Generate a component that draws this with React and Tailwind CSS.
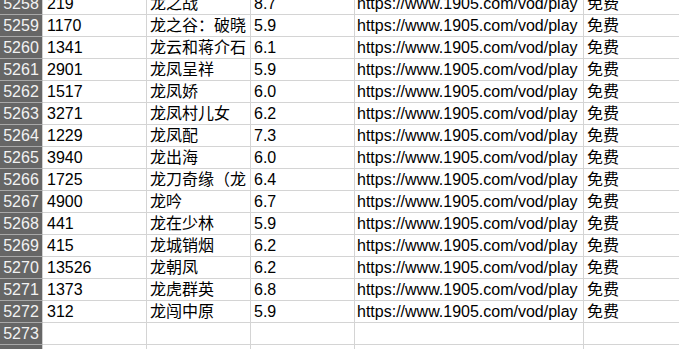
import React from "react";

const rows = [
  ["5258", "219", "龙之战", "8.7", true],
  ["5259", "1170", "龙之谷：破晓", "5.9", true],
  ["5260", "1341", "龙云和蒋介石", "6.1", true],
  ["5261", "2901", "龙凤呈祥", "5.9", true],
  ["5262", "1517", "龙凤娇", "6.0", true],
  ["5263", "3271", "龙凤村儿女", "6.2", true],
  ["5264", "1229", "龙凤配", "7.3", true],
  ["5265", "3940", "龙出海", "6.0", true],
  ["5266", "1725", "龙刀奇缘（龙", "6.4", true],
  ["5267", "4900", "龙吟", "6.7", true],
  ["5268", "441", "龙在少林", "5.9", true],
  ["5269", "415", "龙城销烟", "6.2", true],
  ["5270", "13526", "龙朝凤", "6.2", true],
  ["5271", "1373", "龙虎群英", "6.8", true],
  ["5272", "312", "龙闯中原", "5.9", true],
  ["5273", "", "", "", false],
  ["5274", "", "", "", false],
];

const font = { fontFamily: '"Liberation Sans", "Noto Sans CJK SC", sans-serif' };

export default function App() {
  return (
    <div
      className="w-[679px] h-[349px] overflow-hidden bg-white text-black text-[16px]"
      style={font}
    >
      <div className="-mt-[7px]">
        {rows.map(([n, a, b, c, has]) => (
          <div key={n} className="flex h-[22px] leading-[22px]">
            <div className="w-[43px] shrink-0 bg-[#666666] text-[#f2f2f2] border-r border-r-[#d0d0d0] border-b border-b-[#a8a8a8] text-center overflow-hidden whitespace-nowrap">
              {n}
            </div>
            <div className="w-[104px] shrink-0 border-r border-b border-[#d4d4d4] pl-[4px] overflow-hidden whitespace-nowrap">
              {a}
            </div>
            <div className="w-[104px] shrink-0 border-r border-b border-[#d4d4d4] pl-[3px] overflow-hidden whitespace-nowrap">
              {b}
            </div>
            <div className="w-[104px] shrink-0 border-r border-b border-[#d4d4d4] pl-[3px] overflow-hidden whitespace-nowrap">
              {c}
            </div>
            <div className="w-[229px] shrink-0 border-r border-b border-[#d4d4d4] pl-[2px] overflow-hidden whitespace-nowrap">
              {has ? "https://www.1905.com/vod/play" : ""}
            </div>
            <div className="flex-1 border-b border-[#d4d4d4] pl-[3px] overflow-hidden whitespace-nowrap">
              {has ? "免费" : ""}
            </div>
          </div>
        ))}
      </div>
    </div>
  );
}
